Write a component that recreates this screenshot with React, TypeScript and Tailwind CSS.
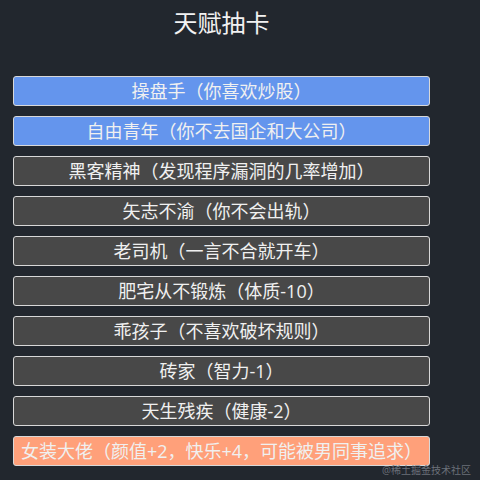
import React from 'react';

type Talent = { label: string; tone: 'blue' | 'gray' | 'orange' };

const talents: Talent[] = [
  { label: '操盘手（你喜欢炒股）', tone: 'blue' },
  { label: '自由青年（你不去国企和大公司）', tone: 'blue' },
  { label: '黑客精神（发现程序漏洞的几率增加）', tone: 'gray' },
  { label: '矢志不渝（你不会出轨）', tone: 'gray' },
  { label: '老司机（一言不合就开车）', tone: 'gray' },
  { label: '肥宅从不锻炼（体质-10）', tone: 'gray' },
  { label: '乖孩子（不喜欢破坏规则）', tone: 'gray' },
  { label: '砖家（智力-1）', tone: 'gray' },
  { label: '天生残疾（健康-2）', tone: 'gray' },
  { label: '女装大佬（颜值+2，快乐+4，可能被男同事追求）', tone: 'orange' },
];

const toneClass = {
  blue: 'bg-[#6495ed]',
  gray: 'bg-[#484848]',
  orange: 'bg-[#ffa07a]',
};

export default function App() {
  return (
    <div
      className="relative w-[480px] h-[480px] bg-[#22272e] overflow-hidden"
      style={{ fontFamily: '"Open Sans", "Noto Sans CJK SC", sans-serif' }}
    >
      <div className="w-[443px] px-[13px]">
        {/* Title */}
        <h1 className="mt-[5px] h-[36px] leading-[36px] text-center text-[24px] text-[#f2f2f2]">
          天赋抽卡
        </h1>

        {/* Talent cards */}
        <div className="mt-[35px] flex flex-col gap-[10px]">
          {talents.map((t) => (
            <button
              key={t.label}
              className={`h-[30px] w-[417px] rounded-[3px] border border-[#d8d8d8] ${toneClass[t.tone]} text-[18px] leading-[28px] text-[#f0f0f0] text-center whitespace-nowrap`}
            >
              {t.label}
            </button>
          ))}
        </div>
      </div>

      {/* Watermark */}
      <span className="absolute right-[9px] bottom-[4px] text-[10px] leading-[12px] text-[#6b7079]">
        @稀土掘金技术社区
      </span>
    </div>
  );
}
